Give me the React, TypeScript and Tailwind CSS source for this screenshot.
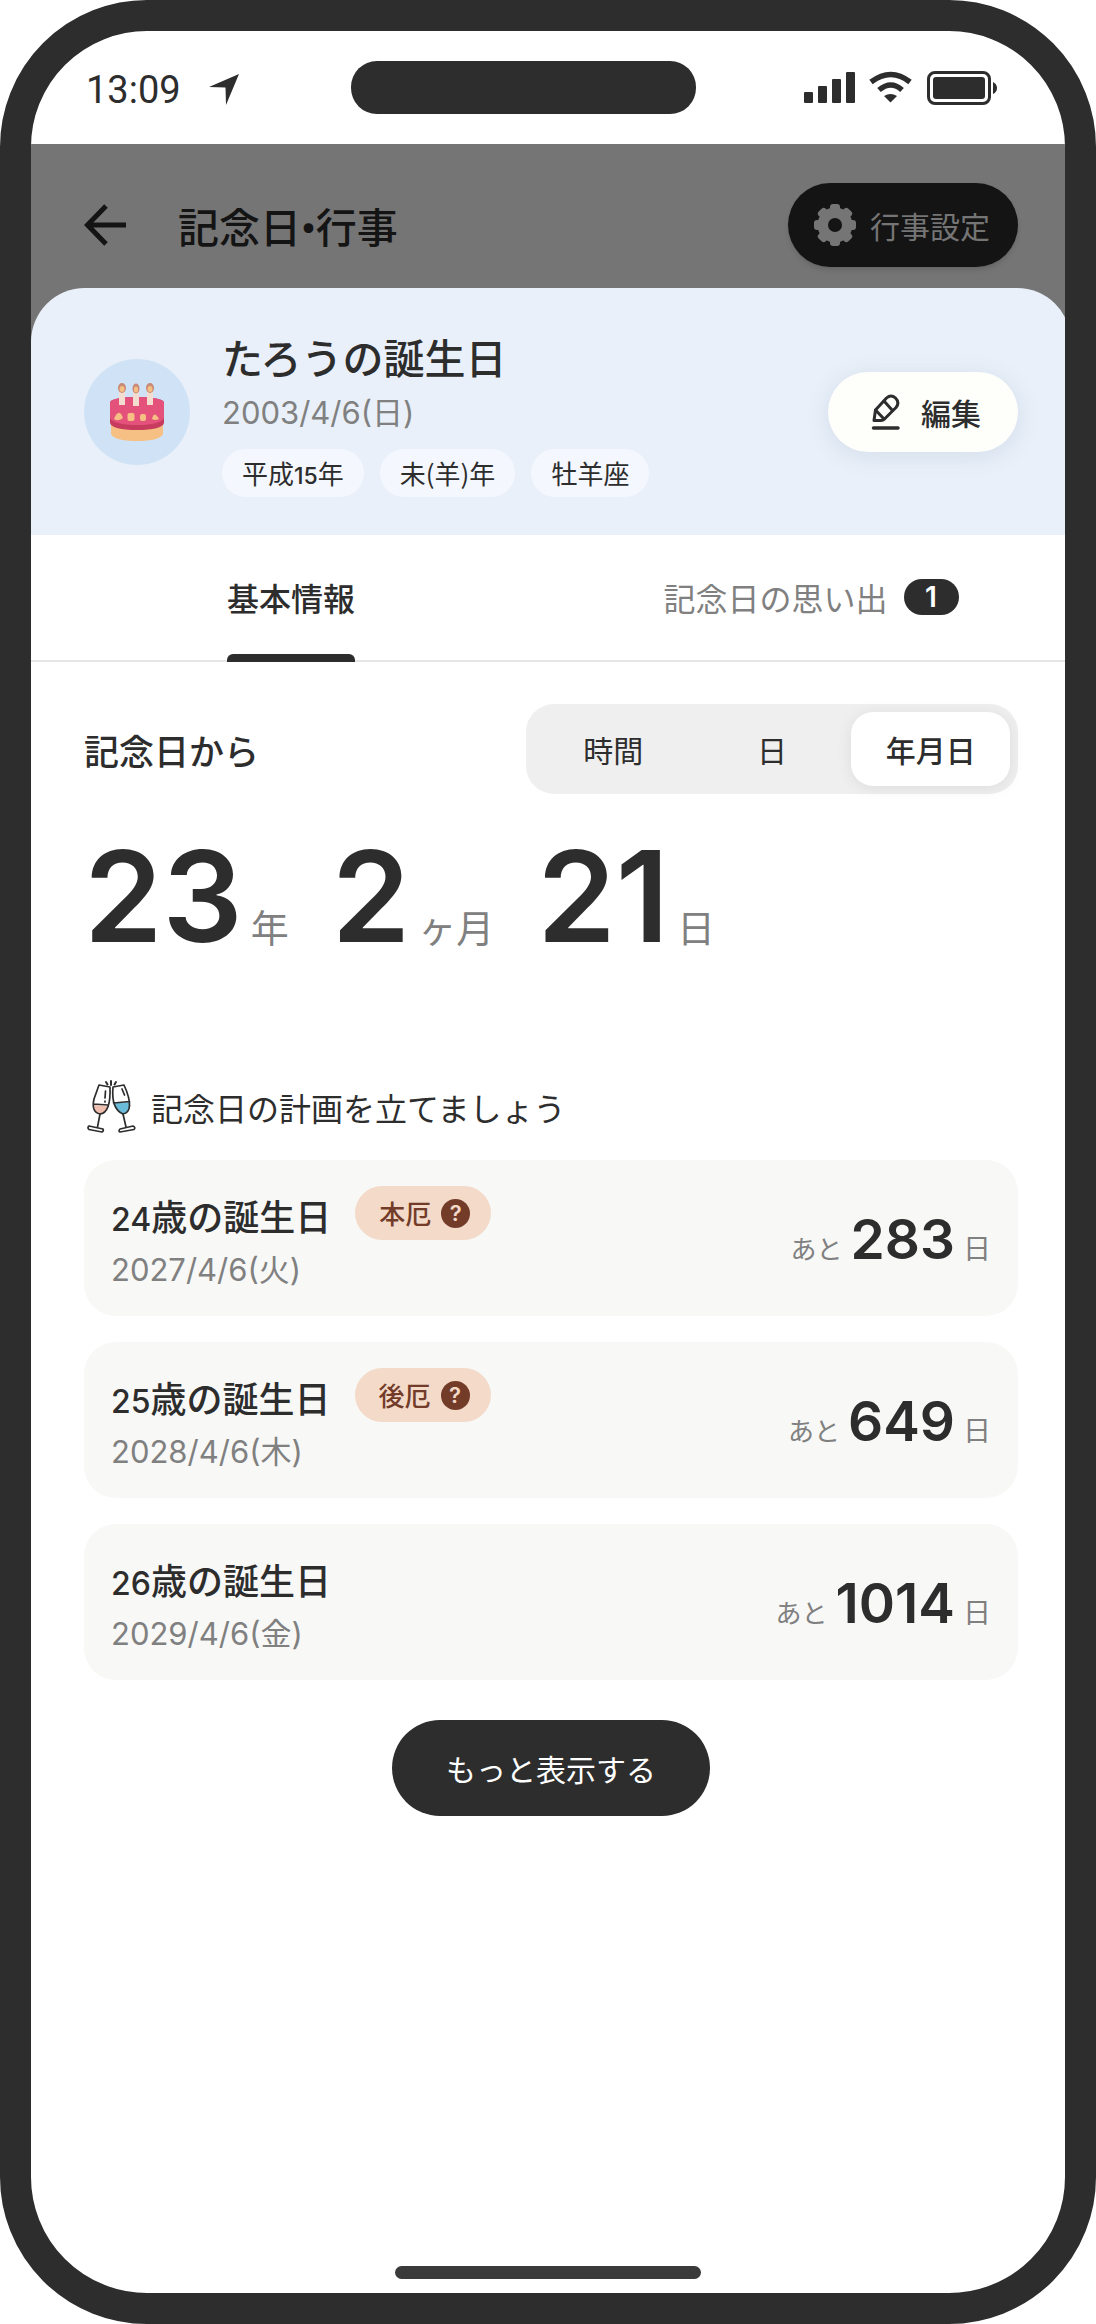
import React, { useState } from 'react';

interface Plan {
    age: number;
    date: string;
    daysLeft: number;
    yaku?: string;
}

const plans: Plan[] = [
    { age: 24, date: '2027/4/6(火)', daysLeft: 283, yaku: '本厄' },
    { age: 25, date: '2028/4/6(木)', daysLeft: 649, yaku: '後厄' },
    { age: 26, date: '2029/4/6(金)', daysLeft: 1014 },
];

const elapsed = [
    { value: 23, unit: '年' },
    { value: 2, unit: 'ヶ月' },
    { value: 21, unit: '日' },
];

const units = ['時間', '日', '年月日'];

const StatusIcons: React.FC = () => (
    <svg width="194" height="34" viewBox="0 0 194 34" fill="#2d2d2d" aria-hidden="true">
        <rect x="0" y="21" width="9" height="11" rx="1" />
        <rect x="14" y="15" width="9" height="17" rx="1" />
        <rect x="28" y="8" width="9" height="24" rx="1" />
        <rect x="42" y="1" width="9" height="31" rx="1" />
        <g fill="none" stroke="#2d2d2d" strokeWidth="5.5">
            <path d="M67 11 Q87 -4 106 11" />
            <path d="M75 19 Q87 9 98 19" />
        </g>
        <path d="M80 25 Q86.500 21 93 25 L86.500 31.500 Z" />
        <rect x="124.500" y="1.500" width="61" height="31" rx="6.500" fill="none" stroke="#2d2d2d" strokeWidth="3" />
        <rect x="129" y="6" width="52" height="22" rx="3" />
        <path d="M189 11 Q193 13 193 17 Q193 21 189 23 Z" />
    </svg>
);

const LocationIcon: React.FC = () => (
    <svg width="30" height="31" viewBox="0 0 30 31" fill="#2d2d2d" aria-hidden="true">
        <path d="M30 0 L17 31 L16.500 13.500 L0 13 Z" />
    </svg>
);

const BackIcon: React.FC = () => (
    <svg width="42" height="42" viewBox="0 0 42 42" fill="none" stroke="#141414" strokeWidth="5" aria-hidden="true">
        <path d="M22 2 L3.500 21 L22 40 M3 21 H42" />
    </svg>
);

const GearIcon: React.FC = () => (
    <svg width="42" height="42" viewBox="-21 -21 42 42" aria-hidden="true">
        <g fill="#757575">
            <circle r="17.500" />
            {[0, 45, 90, 135].map(deg => (
                <rect key={deg} x="-5" y="-21" width="10" height="42" rx="3" transform={`rotate(${deg})`} />
            ))}
        </g>
        <circle r="7" fill="#141414" />
    </svg>
);

const PencilIcon: React.FC = () => (
    <svg width="30" height="36" viewBox="0 0 30 36" fill="none" stroke="#2d2d2d" strokeWidth="3" strokeLinejoin="round" strokeLinecap="round" aria-hidden="true">
        <path d="M3 26.500 L4.500 16 L15.500 4 Q20 0 24.500 4 Q29 8.500 25 13.500 L13.500 25 Q12 26.500 10 26.500 Z" />
        <path d="M4.500 16 L13 25 M13 7 L21.500 16.500" />
        <path d="M2.500 34 H27" strokeWidth="3.500" />
    </svg>
);

const CakeIcon: React.FC = () => (
    <svg width="54" height="60" viewBox="0 0 54 60" aria-hidden="true">
        <path d="M1 42 H53 V52 Q50 59 27 59 Q4 59 1 52 Z" fill="#f6bf83" />
        <path d="M0 20 Q4 15 27 15 Q50 15 54 20 V41 Q52 48 27 48 Q2 48 0 41 Z" fill="#c73b5e" />
        <path d="M0 20 Q4 15 27 15 Q50 15 54 20 V36 Q50 43 27 43 Q4 43 0 36 Z" fill="#e4527c" />
        <g fill="#f3ddd0">
            <rect x="9" y="9" width="6" height="14" />
            <rect x="23" y="9" width="6" height="15" />
            <rect x="37" y="9" width="6" height="14" />
        </g>
        <g fill="#c98a78">
            <ellipse cx="12" cy="6" rx="4" ry="5" />
            <ellipse cx="26" cy="6.500" rx="3.500" ry="5" />
            <ellipse cx="40" cy="6" rx="4" ry="5" />
        </g>
        <g fill="#f6bf83">
            <ellipse cx="12" cy="7" rx="2.500" ry="3" />
            <ellipse cx="26" cy="7.500" rx="2" ry="3" />
            <ellipse cx="40" cy="7" rx="2.500" ry="3" />
            <path d="M4 37 Q9 25 13 36 Q8 40 4 37 Z" />
            <rect x="17.500" y="31" width="7" height="8" rx="2" />
            <rect x="30" y="32" width="6" height="7" rx="2" />
            <path d="M42 37 Q44 28 49 37 Q45 39 42 37 Z" />
        </g>
    </svg>
);

const CheersIcon: React.FC = () => (
    <svg width="52" height="54" viewBox="-3 0 52 54" fill="none" stroke="#2d2d2d" strokeWidth="1.700" strokeLinejoin="round" strokeLinecap="round" aria-hidden="true">
        <path d="M7 25 L21 26 Q18 34 13 34 Q7 32 7 25 Z" fill="#eebfae" stroke="none" />
        <path d="M27 23 L43 22 Q43 33 36 34 Q29 32 27 23 Z" fill="#6bbcd8" stroke="none" />
        <path d="M12 5 L23 7 Q24 33 13 34 Q4 32 7 19 Z M6.500 24 L21 25" />
        <path d="M26 7 L37 5 Q43 18 42.500 26 Q42 33 36 34 Q24 29 26 7 Z M26.500 23 L42.500 21.500" />
        <path d="M13 34 L10.500 47 M36 34 L39 47" />
        <path d="M2 46 L16 49 Q17 51 15 52 L2 49.500 Q0 47.500 2 46 Z" />
        <path d="M46 46 L33 49 Q31 51 33 52 L47 49.500 Q49 47.500 46 46 Z" />
        <path d="M18.500 11 L18 18 M18 21 V22 M35 9 L37.500 15" />
        <path d="M24 1 V5 M19 2 L20.500 4.500 M29 2 L27.500 4.500" strokeWidth="2" />
    </svg>
);

const Chip: React.FC<{ children: React.ReactNode }> = ({ children }) => (
    <li className="h-12 rounded-full bg-[#f4f7fd] px-5 text-[26px] leading-[48px]">{children}</li>
);

const PlanCard: React.FC<{ plan: Plan }> = ({ plan }) => (
    <li className="flex justify-between rounded-[32px] bg-[#f8f8f7] px-[27px] py-[26px]">
        <div>
            <div className="flex h-[54px] items-center gap-6">
                <h3 className="pt-1 text-[36px] leading-[50px] font-medium">
                    <span className="font-['Inter'] text-[32px] leading-none">{plan.age}</span>歳の誕生日
                </h3>
                {plan.yaku && (
                    <button type="button" className="flex h-[54px] items-center gap-2.5 rounded-full bg-[#f3dac9] pr-[21px] pl-6 text-[26px] leading-none font-medium text-[#733c29]">
                        {plan.yaku}
                        <span className="flex size-[29px] items-center justify-center rounded-full bg-[#733c29] font-['Inter'] text-[22px] font-semibold text-[#f3dac9]">?</span>
                    </button>
                )}
            </div>
            <p className="mt-2.5 font-['Inter','Noto_Sans_CJK_JP',sans-serif] text-[31px] leading-10 text-[#808080]">{plan.date}</p>
        </div>
        <p className="mt-[23px] flex items-baseline leading-[60px] text-[#808080]">
            <span className="text-[26px]">あと</span>
            <span className="ml-2 font-['Inter'] text-[55px] font-semibold text-[#2d2d2d]">{plan.daysLeft}</span>
            <span className="ml-2 text-[28px]">日</span>
        </p>
    </li>
);

const App: React.FC = () => {
    const [tab, setTab] = useState('info');
    const [unit, setUnit] = useState('年月日');

    return (
        <div className="flex min-h-screen flex-col overflow-hidden rounded-[147px] border-[31px] border-[#2d2d2d] bg-white font-['Noto_Sans_CJK_JP',sans-serif] text-[#2d2d2d]">
            <div className="flex h-[113px] items-center pr-[67px] pl-[55px]">
                <div className="flex w-[265px] items-center gap-7 pt-1 font-['Roboto'] text-[38px] leading-none">
                    13:09
                    <LocationIcon />
                </div>
                <div className="h-[53px] w-[345px] rounded-[26px] bg-[#2d2d2d]" />
                <div className="ml-auto">
                    <StatusIcons />
                </div>
            </div>

            <div className="-mr-1.5 flex flex-1 flex-col">
                <div className="bg-[#757575]">
                    <header className="flex h-36 items-center px-[53px] pt-[18px]">
                        <div className="flex flex-1 items-center gap-[52px]">
                            <button type="button" aria-label="戻る"><BackIcon /></button>
                            <h1 className="pt-1 text-[41px] leading-none font-medium text-[#141414]">
                                記念日<span className="font-['Roboto'] font-bold">•</span>行事
                            </h1>
                        </div>
                        <button type="button" className="flex h-[84px] items-center gap-3.5 rounded-full bg-[#141414] pr-7 pl-[26px] text-[30px] text-[#757575] shadow-md">
                            <GearIcon />
                            行事設定
                        </button>
                    </header>

                    <section className="flex items-center rounded-t-[54px] bg-[#e9f0f9] px-[53px] pt-[39px] pb-[38px]">
                        <div className="flex size-[106px] items-center justify-center rounded-full bg-[#d0e3f6]">
                            <CakeIcon />
                        </div>
                        <div className="ml-8 flex-1">
                            <h2 className="text-[41px] leading-[58px] font-medium">たろうの誕生日</h2>
                            <p className="mt-2 font-['Inter','Noto_Sans_CJK_JP',sans-serif] text-[31px] leading-10 text-[#808080]">2003/4/6(日)</p>
                            <ul className="mt-4 flex gap-4">
                                <Chip>平成<span className="font-['Inter'] text-[23px] leading-none font-medium">15</span>年</Chip>
                                <Chip>未(羊)年</Chip>
                                <Chip>牡羊座</Chip>
                            </ul>
                        </div>
                        <button type="button" className="flex h-20 items-center gap-5 rounded-full bg-[#fefefb] pr-[37px] pl-[43px] text-[30px] font-medium shadow-[0_4px_24px_rgba(60,90,130,0.12)]">
                            <PencilIcon />
                            編集
                        </button>
                    </section>
                </div>

                <div role="tablist" className="grid grid-cols-2 border-b-2 border-[#e6e6e6] text-[32px] leading-none">
                    <button type="button" role="tab" aria-selected={tab === 'info'} onClick={() => setTab('info')} className="flex h-[125px] justify-center">
                        <span className={`relative flex h-full items-center pb-0.5 ${tab === 'info' ? 'font-medium' : 'text-[#808080]'}`}>
                            基本情報
                            {tab === 'info' && <span className="absolute inset-x-0 -bottom-0.5 h-2 rounded-t-md bg-[#2d2d2d]" />}
                        </span>
                    </button>
                    <button type="button" role="tab" aria-selected={tab === 'memories'} onClick={() => setTab('memories')} className="flex h-[125px] justify-center">
                        <span className={`relative flex h-full items-center gap-4 pb-0.5 ${tab === 'memories' ? 'font-medium' : 'text-[#808080]'}`}>
                            記念日の思い出
                            <span className="flex h-9 w-[55px] items-center justify-center rounded-full bg-[#2d2d2d] font-['Inter'] text-[28px] font-semibold text-white">1</span>
                            {tab === 'memories' && <span className="absolute inset-x-0 -bottom-0.5 h-2 rounded-t-md bg-[#2d2d2d]" />}
                        </span>
                    </button>
                </div>

                <main className="px-[53px] pt-[42px]">
                    <div className="flex items-center justify-between">
                        <h2 className="text-[35px] leading-none font-medium">記念日から</h2>
                        <div className="grid h-[90px] w-[492px] grid-cols-3 rounded-[28px] bg-[#efefef] p-2">
                            {units.map(u => (
                                <button
                                    key={u}
                                    type="button"
                                    aria-pressed={unit === u}
                                    onClick={() => setUnit(u)}
                                    className={`rounded-[22px] text-[30px] leading-none ${unit === u ? 'bg-white font-medium shadow-[0_2px_16px_rgba(0,0,0,0.08)]' : ''}`}
                                >
                                    {u}
                                </button>
                            ))}
                        </div>
                    </div>

                    <div className="mt-[22px] flex items-baseline gap-[43px]">
                        {elapsed.map(e => (
                            <p key={e.unit} className="flex items-baseline gap-2">
                                <span className="font-['Inter'] text-[126px] leading-[160px] font-semibold">{e.value}</span>
                                <span className="text-[38px] text-[#808080]">{e.unit}</span>
                            </p>
                        ))}
                    </div>

                    <div className="mt-[104px] flex items-center gap-[15px]">
                        <CheersIcon />
                        <p className="text-[32px] leading-[54px]">記念日の計画を立てましょう</p>
                    </div>

                    <ul className="mt-[26px] flex flex-col gap-[26px]">
                        {plans.map(plan => <PlanCard key={plan.age} plan={plan} />)}
                    </ul>

                    <div className="mt-10 flex justify-center">
                        <button type="button" className="h-24 rounded-full bg-[#2d2d2d] px-[54px] text-[30px] text-white">もっと表示する</button>
                    </div>
                </main>
            </div>

            <div className="mx-auto mb-3.5 h-[13px] w-[306px] rounded-full bg-[#3a3a3a]" />
        </div>
    );
};

export default App;
